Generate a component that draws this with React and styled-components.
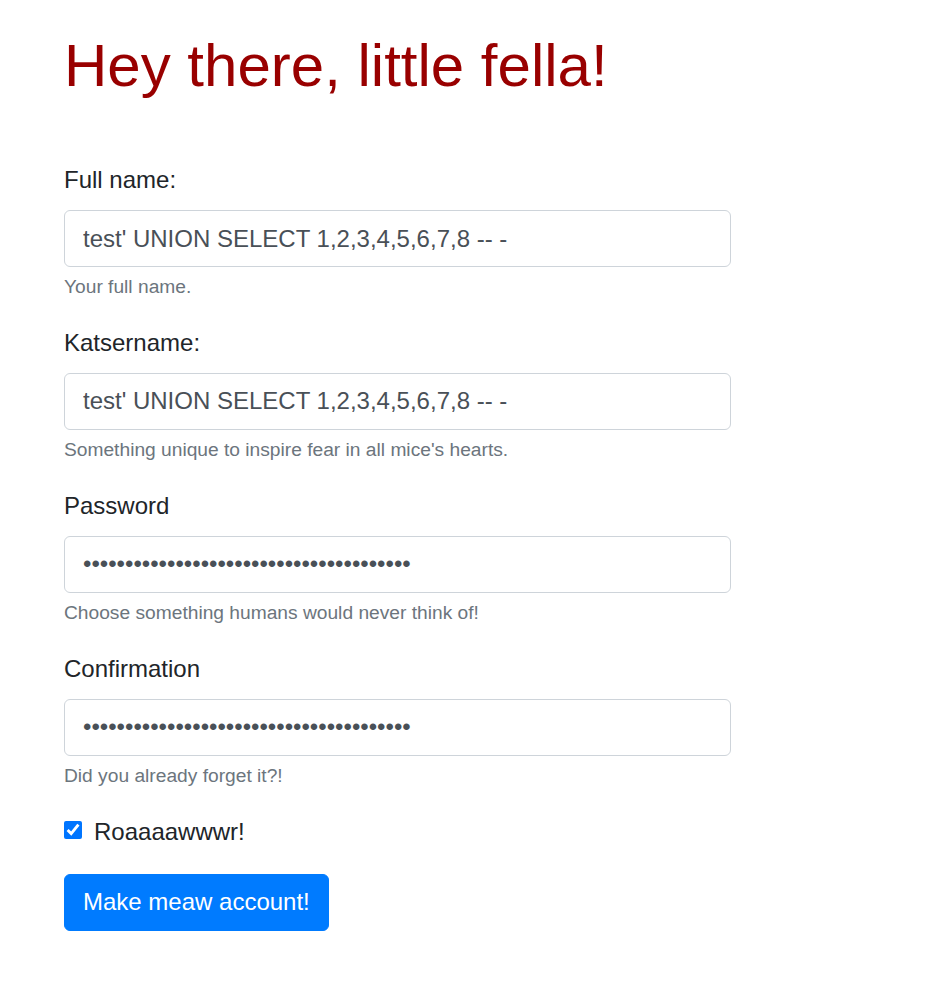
import React, { useState } from 'react';
import styled, { createGlobalStyle } from 'styled-components';

const GlobalStyle = createGlobalStyle`
  html, body {
    margin: 0;
    padding: 0;
    background: #fff;
  }

  body {
    font-family: "Liberation Sans", Arial, Helvetica, sans-serif;
    font-size: 24px;
    line-height: 1.5;
    color: #212529;
  }

  * {
    box-sizing: border-box;
  }
`;

const Page = styled.div`
  padding: 30px 0 40px 64px;
`;

const Title = styled.h1`
  margin: 0 0 60px;
  font-size: 60px;
  font-weight: 400;
  line-height: 1.2;
  color: #990000;
`;

const Form = styled.form`
  width: 667px;
`;

const Group = styled.div`
  margin-bottom: 23.1px;
`;

const Label = styled.label`
  display: inline-block;
  margin-bottom: 12px;
`;

const Input = styled.input`
  display: block;
  width: 100%;
  height: 57px;
  padding: 9px 18px;
  font-family: inherit;
  font-size: 24px;
  line-height: 1.5;
  color: #495057;
  background: #fff;
  border: 1px solid #ced4da;
  border-radius: 6px;
  outline: none;
`;

const Hint = styled.small`
  display: block;
  margin-top: 6px;
  font-size: 19.2px;
  color: #6c757d;
`;

const Check = styled.div`
  position: relative;
  display: block;
  padding-left: 30px;
  margin-bottom: 24px;

  input {
    position: absolute;
    width: 18px;
    height: 18px;
    margin: 7px 0 0 -30px;
  }
`;

const Button = styled.button`
  display: inline-block;
  height: 57px;
  padding: 9px 18px;
  font-family: inherit;
  font-size: 24px;
  line-height: 1.5;
  color: #fff;
  background: #007bff;
  border: 1px solid #007bff;
  border-radius: 6px;
  cursor: pointer;
`;

const injection = "test' UNION SELECT 1,2,3,4,5,6,7,8 -- -";
const secret = 'x'.repeat(39);

const fields = [
  { id: 'fullname', label: 'Full name:', type: 'text', value: injection, hint: 'Your full name.' },
  {
    id: 'katsername',
    label: 'Katsername:',
    type: 'text',
    value: injection,
    hint: "Something unique to inspire fear in all mice's hearts."
  },
  {
    id: 'password',
    label: 'Password',
    type: 'password',
    value: secret,
    hint: 'Choose something humans would never think of!'
  },
  {
    id: 'confirmation',
    label: 'Confirmation',
    type: 'password',
    value: secret,
    hint: 'Did you already forget it?!'
  }
];

const App = () => {
  const [values, setValues] = useState(() =>
    Object.fromEntries(fields.map((f) => [f.id, f.value]))
  );
  const [roar, setRoar] = useState(true);

  return (
    <Page>
      <GlobalStyle />
      <Title>Hey there, little fella!</Title>
      <Form onSubmit={(e) => e.preventDefault()}>
        {fields.map((f) => (
          <Group key={f.id}>
            <Label htmlFor={f.id}>{f.label}</Label>
            <Input
              id={f.id}
              type={f.type}
              value={values[f.id]}
              onChange={(e) => setValues({ ...values, [f.id]: e.target.value })}
            />
            <Hint>{f.hint}</Hint>
          </Group>
        ))}
        <Check>
          <input
            id="roar"
            type="checkbox"
            checked={roar}
            onChange={(e) => setRoar(e.target.checked)}
          />
          <label htmlFor="roar">Roaaaawwwr!</label>
        </Check>
        <Button type="submit">Make meaw account!</Button>
      </Form>
    </Page>
  );
};

export default App;
